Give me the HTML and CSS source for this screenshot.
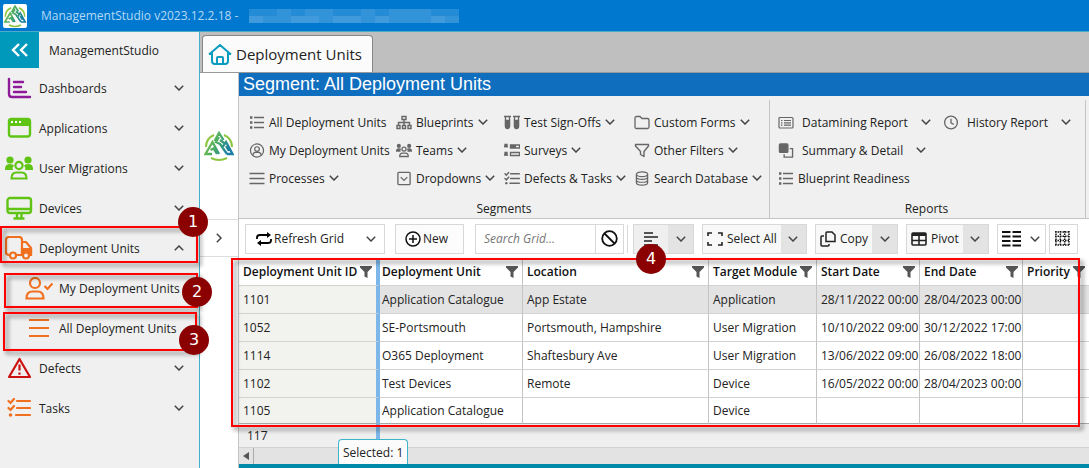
FILE: index.html
```html
<!DOCTYPE html>
<html lang="en">
<head>
    <meta charset="UTF-8">
    <meta name="viewport" content="width=device-width, initial-scale=1.0">
    <title>ManagementStudio</title>
    <link rel="stylesheet" href="styles.css">
</head>
<body>

<!-- Shared icons -->
<svg class="sprite" aria-hidden="true">
    <defs>
        <linearGradient id="logo-grad" gradientUnits="userSpaceOnUse" x1="2" y1="0" x2="28" y2="12">
            <stop offset="0" stop-color="#8cc63f"/>
            <stop offset=".5" stop-color="#4fae60"/>
            <stop offset="1" stop-color="#1b7fa3"/>
        </linearGradient>
    </defs>
    <symbol id="i-logo" viewBox="0 0 30 32">
        <g fill="none" stroke-width="2">
            <path stroke="#8cc63f" d="M2 17A13 13 0 0 1 10 5M20 5a13 13 0 0 1 8 12M7 28q8 4 16 0"/>
            <path stroke="url(#logo-grad)" stroke-width="2.300" d="M8 24H1.500L8.500 12 15 24M6.500 20l3-1.500L13 24M10.500 11L15 3l4.500 7M15 7l-3 5 4 2 7 10M16 10l4 3M18.500 17l3.500-5 6.500 12H23M22 16l3 5"/>
        </g>
    </symbol>
    <symbol id="i-down" viewBox="0 0 10 6"><path d="M.8.8L5 5l4.200-4.200" fill="none" stroke="currentColor" stroke-width="1.500"/></symbol>
    <symbol id="i-filter" viewBox="0 0 12 12"><path d="M0 0h12v1.500L7.500 6v6l-3-1.500V6L0 1.500z" fill="currentColor"/></symbol>
    <symbol id="i-list" viewBox="0 0 16 14"><path d="M5 2h10M5 7h10M5 12h10" stroke="currentColor" stroke-width="1.500"/><path d="M1 .8h2.400v2.400H1zM1 5.800h2.400v2.400H1zM1 10.800h2.400v2.400H1z" fill="currentColor"/></symbol>
    <symbol id="i-bars" viewBox="0 0 16 14"><path d="M.5 2h15M.5 7h15M.5 12h15" stroke="currentColor" stroke-width="1.500"/></symbol>
    <symbol id="i-tasks" viewBox="0 0 24 20"><g fill="none" stroke="currentColor" stroke-width="2.200" stroke-linecap="round"><path d="M10 3h13M10 10h13M9 17h14M1.500 3l2 2L7 1M1.500 10l2 2L7 8"/></g><circle cx="3.500" cy="17" r="1.800" fill="currentColor"/></symbol>
    <symbol id="i-users" viewBox="0 0 28 24"><g fill="currentColor"><circle cx="5" cy="4" r="3.600"/><circle cx="23" cy="4" r="3.600"/><path d="M0 13q0-5 5-5 3 0 4 1.500-2 2-1 4.500H0zM28 13q0-5-5-5-3 0-4 1.500 2 2 1 4.500h8z"/></g><g fill="none" stroke="currentColor" stroke-width="2.200"><circle cx="14" cy="9.500" r="3.600"/><path d="M6.500 22.500q0-6 5-6h5q5 0 5 6z"/></g></symbol>
</svg>

<header class="titlebar">
    <span class="app-logo"><svg width="24" height="24"><use href="#i-logo"/></svg></span>
    <span>ManagementStudio v2023.12.2.18 -</span>
    <svg class="redacted" width="210" height="14" viewBox="0 0 15 2" preserveAspectRatio="none" shape-rendering="crispEdges" fill="#fff">
        <path opacity=".14" d="M0 0h15v1H0z"/>
        <path opacity=".2" d="M0 1h15v1H0z"/>
        <path opacity=".07" d="M2 0h1v1H2zM4 0h2v1H4zM8 0h1v1H8zM10 0h3v1h-3zM0 1h1v1H0zM3 1h2v1H3zM6 1h2v1H6zM9 1h1v1H9zM13 1h1v1h-1z"/>
    </svg>
</header>

<div class="app">
    <nav class="sidebar">
        <div class="sidebar-head">
            <button class="collapse" aria-label="Collapse menu"><svg width="18" height="14" viewBox="0 0 18 14" fill="none" stroke="#fff" stroke-width="2.400"><path d="M8 1L2 7l6 6M16 1l-6 6 6 6"/></svg></button>
            <span>ManagementStudio</span>
        </div>
        <ul class="menu">
            <li><a href="#">
                <svg class="menu-icon" viewBox="0 0 26 24" fill="none" stroke="#8e1a99" stroke-width="2.400" stroke-linecap="round"><path d="M3 3v15q0 3 3 3h18M8 6h9M8 11h7M8 16h12"/></svg>
                <span>Dashboards</span><svg class="chev"><use href="#i-down"/></svg></a></li>
            <li><a href="#">
                <svg class="menu-icon" viewBox="0 0 26 24"><rect x="3" y="3" width="21" height="17.500" rx="2.500" fill="none" stroke="#60c414" stroke-width="2.400"/><path d="M3 3h21v7H3z" fill="#60c414"/><path d="M5 6h2M9 6h2M13 6h2" stroke="#fff" stroke-width="2"/></svg>
                <span>Applications</span><svg class="chev"><use href="#i-down"/></svg></a></li>
            <li><a href="#">
                <svg class="menu-icon green"><use href="#i-users"/></svg>
                <span>User Migrations</span><svg class="chev"><use href="#i-down"/></svg></a></li>
            <li><a href="#">
                <svg class="menu-icon" viewBox="0 0 26 24" fill="none" stroke="#60c414" stroke-width="2.400"><rect x="1.500" y="2" width="23.500" height="15" rx="2.500"/><path d="M2 13h23M11 17v5M15.500 17v5M7.500 22.500h11"/></svg>
                <span>Devices</span><svg class="chev"><use href="#i-down"/></svg></a></li>
            <li class="open"><a href="#">
                <svg class="menu-icon truck" viewBox="0 0 28 24" fill="none" stroke="#f07020" stroke-width="2.200"><path d="M4 19q-3 0-3-3V4q0-3 3-3h10q3 0 3 3v15h-6M17 6h4l5 6v7h-1"/><path d="M17 13h9v5h-9z" fill="#f07020"/><circle cx="8" cy="19.500" r="3" fill="#f0f0f0"/><circle cx="21" cy="19.500" r="3" fill="#f0f0f0"/></svg>
                <span>Deployment Units</span><svg class="chev up"><use href="#i-down"/></svg></a>
                <span class="mark mark-1"></span><span class="badge badge-1">1</span>
                <ul class="submenu">
                    <li><a href="#">
                        <svg width="28" height="23" viewBox="0 0 28 23" fill="none" stroke="#f07020" stroke-width="2.200"><circle cx="10" cy="6" r="5"/><path d="M1.500 21.500q0-7 6-7h5q6 0 6 7zM19.500 9l3 3 5-5.500"/></svg>
                        <span>My Deployment Units</span></a>
                        <span class="mark mark-2"></span><span class="badge badge-2">2</span></li>
                    <li><a href="#">
                        <svg width="28" height="18" viewBox="0 0 28 18" stroke="#f07020" stroke-width="2"><path d="M4 1h20M4 9h20M4 17h20"/></svg>
                        <span>All Deployment Units</span></a>
                        <span class="mark mark-3"></span><span class="badge badge-3">3</span></li>
                </ul>
            </li>
            <li><a href="#">
                <svg class="menu-icon" viewBox="0 0 26 24" fill="none" stroke="#cc1111" stroke-width="2.200" stroke-linejoin="round"><path d="M13.500 3L24 21H3zM13.500 8.500v6M13.500 16.500v2.200"/></svg>
                <span>Defects</span><svg class="chev"><use href="#i-down"/></svg></a></li>
            <li><a href="#">
                <svg class="menu-icon orange"><use href="#i-tasks" x="2" y="2" width="24" height="20"/></svg>
                <span>Tasks</span><svg class="chev"><use href="#i-down"/></svg></a></li>
        </ul>
    </nav>

    <main class="main">
        <div class="tabs">
            <a class="tab" href="#">
                <svg width="24" height="21" viewBox="0 0 24 21" fill="none" stroke="#0c9cc0" stroke-width="2" stroke-linejoin="round"><path d="M1 10.500L12 1l11 9.500M4 8v9q0 3 3 3h10q3 0 3-3V8M9 20v-6q0-1 1-1h4q1 0 1 1v6"/></svg>
                <span>Deployment Units</span>
            </a>
        </div>
        <div class="workspace">
            <aside class="rail">
                <div class="rail-logo"><svg width="30" height="32"><use href="#i-logo"/></svg></div>
                <button class="rail-open" aria-label="Expand"><svg class="chev right"><use href="#i-down"/></svg></button>
            </aside>
            <section class="content">
                <h1>Segment: All Deployment Units</h1>

                <div class="ribbon">
                    <div class="group segments">
                        <div class="group-items">
                            <button><svg class="ic"><use href="#i-list"/></svg>All Deployment Units</button>
                            <button><svg class="ic" viewBox="0 0 16 14" fill="none" stroke="currentColor" stroke-width="1.400"><path d="M6 1h4v3H6zM8 4v6M2.500 10V7h11v3"/><path d="M1 10h3v3H1zM6.500 10h3v3h-3zM12 10h3v3h-3z"/></svg>Blueprints<svg class="chev"><use href="#i-down"/></svg></button>
                            <button><svg class="ic" viewBox="0 0 16 14" fill="none" stroke="currentColor" stroke-width="1.300"><path d="M0 1h7M9 1h7M1.500 1v10q0 2 2 2t2-2V1M10.500 1v10q0 2 2 2t2-2V1"/><path d="M1.500 5h4v6q-2 3-4 0zM10.500 5h4v6q-2 3-4 0z" fill="currentColor"/></svg>Test Sign-Offs<svg class="chev"><use href="#i-down"/></svg></button>
                            <button><svg class="ic" viewBox="0 0 16 14" fill="none" stroke="currentColor" stroke-width="1.300"><path d="M1 2.500Q1 1 2.500 1H6l2 2h5.500Q15 3 15 4.500v7q0 1.500-1.500 1.500h-11Q1 13 1 11.500z"/></svg>Custom Forms<svg class="chev"><use href="#i-down"/></svg></button>

                            <button><svg class="ic" viewBox="0 0 16 16" fill="none" stroke="currentColor" stroke-width="1.300"><circle cx="8" cy="8" r="7"/><circle cx="8" cy="6.500" r="2.500"/><path d="M3.500 13q.5-3 3-3h3q2.500 0 3 3"/></svg>My Deployment Units</button>
                            <button><svg class="ic"><use href="#i-users"/></svg>Teams<svg class="chev"><use href="#i-down"/></svg></button>
                            <button><svg class="ic" viewBox="0 0 16 14" fill="none" stroke="currentColor" stroke-width="1.300"><path d="M0 3h4M0 11.500h4" stroke-width="1.500"/><path d="M1 1h2v2H1zM1 9h2v2H1z" fill="currentColor"/><path d="M6.500 1.500h9v3h-9zM6.500 9h9v3h-9z"/><path d="M6 3h6" stroke-width="3"/></svg>Surveys<svg class="chev"><use href="#i-down"/></svg></button>
                            <button><svg class="ic" viewBox="0 0 16 14" fill="none" stroke="currentColor" stroke-width="1.400" stroke-linejoin="round"><path d="M1.500 1h13v1.500L10 8v5l-3.500-2V8l-5-5.500z"/></svg>Other Filters<svg class="chev"><use href="#i-down"/></svg></button>

                            <button><svg class="ic"><use href="#i-bars"/></svg>Processes<svg class="chev"><use href="#i-down"/></svg></button>
                            <button><svg class="ic" viewBox="0 0 16 16" fill="none" stroke="currentColor" stroke-width="1.400"><rect x="1.500" y="1.500" width="13" height="13" rx="1"/><path d="M4.500 6.500L8 10l3.500-3.500"/></svg>Dropdowns<svg class="chev"><use href="#i-down"/></svg></button>
                            <button><svg class="ic"><use href="#i-tasks"/></svg>Defects &amp; Tasks<svg class="chev"><use href="#i-down"/></svg></button>
                            <button><svg class="ic" viewBox="0 0 16 16" fill="none" stroke="currentColor" stroke-width="1.300"><ellipse cx="8" cy="3.500" rx="6" ry="2.500"/><path d="M2 3.500v9q0 2.500 6 2.500t6-2.500v-9M2 6.500Q2 9 8 9t6-2.500M2 9.500Q2 12 8 12t6-2.500"/></svg>Search Database<svg class="chev"><use href="#i-down"/></svg></button>
                        </div>
                        <div class="group-name">Segments</div>
                    </div>
                    <div class="group reports">
                        <div class="group-items">
                            <button class="wide"><svg class="ic" viewBox="0 0 16 14" fill="none" stroke="currentColor" stroke-width="1.200"><rect x="1" y="2" width="14" height="10.500" rx="1"/><path d="M3 5h1.500M6 5h7M3 7.300h1.500M6 7.300h7M3 9.600h1.500M6 9.600h7"/></svg>Datamining Report<svg class="chev"><use href="#i-down"/></svg></button>
                            <button class="wide"><svg class="ic" viewBox="0 0 16 16" fill="none" stroke="currentColor" stroke-width="1.400"><circle cx="8" cy="8" r="6.800"/><path d="M8 4v4.500l3 1.500"/></svg>History Report<svg class="chev"><use href="#i-down"/></svg></button>
                            <button class="wide"><svg class="ic" viewBox="0 0 16 16" fill="none" stroke="currentColor" stroke-width="1.400"><rect x="1" y="1" width="9" height="9" rx="1" fill="currentColor"/><path d="M12 6h3v9H6v-3"/></svg>Summary &amp; Detail<svg class="chev"><use href="#i-down"/></svg></button>
                            <span></span>
                            <button><svg class="ic"><use href="#i-list"/></svg>Blueprint Readiness</button>
                        </div>
                        <div class="group-name">Reports</div>
                    </div>
                </div>

                <div class="toolbar">
                    <button class="tool refresh"><svg width="16" height="14" viewBox="0 0 16 14" fill="none" stroke="#000" stroke-width="1.800"><path d="M1 7V5.500Q1 3 4 3h9M15 7v1.500q0 2.500-3 2.500H3"/><path d="M11 0l4 3-4 3zM5 8l-4 3 4 3z" fill="#000" stroke="none"/></svg>Refresh Grid<svg class="chev"><use href="#i-down"/></svg></button>
                    <button class="tool new"><svg width="16" height="16" viewBox="0 0 16 16" fill="none" stroke="#111" stroke-width="1.500"><circle cx="8" cy="8" r="7"/><path d="M8 4v8M4 8h8"/></svg>New</button>
                    <div class="search">
                        <input type="text" placeholder="Search Grid..." aria-label="Search Grid">
                        <button aria-label="Clear search"><svg width="17" height="17" viewBox="0 0 17 17" fill="none" stroke="#111" stroke-width="1.800"><circle cx="8.500" cy="8.500" r="7.300"/><path d="M3.500 3.500l10 10"/></svg></button>
                    </div>
                    <span class="divider"></span>
                    <div class="split">
                        <button class="align" aria-label="Row layout"><svg width="16" height="14" viewBox="0 0 16 14" stroke="#222" stroke-width="1.500"><path d="M1 1h9M1 5h14M1 9h8M1 13h14"/></svg></button>
                        <button class="drop" aria-label="Row layout options"><svg class="chev"><use href="#i-down"/></svg></button>
                    </div>
                    <div class="split">
                        <button><svg width="16" height="14" viewBox="0 0 16 14" fill="none" stroke="#222" stroke-width="1.600"><path d="M1 4V1h4M11 1h4v3M15 10v3h-4M5 13H1v-3"/></svg>Select All</button>
                        <button class="drop" aria-label="Select options"><svg class="chev"><use href="#i-down"/></svg></button>
                    </div>
                    <div class="split">
                        <button><svg width="16" height="16" viewBox="0 0 16 16" fill="none" stroke="#222" stroke-width="1.500"><path d="M7 1h5l3 3v6.500H6V2q0-1 1-1zM4 5H2Q1 5 1 6v8q0 1 1 1h6q1 0 1-1v-1"/></svg>Copy</button>
                        <button class="drop" aria-label="Copy options"><svg class="chev"><use href="#i-down"/></svg></button>
                    </div>
                    <div class="split">
                        <button><svg width="16" height="14" viewBox="0 0 16 14" fill="none" stroke="#222" stroke-width="1.600"><rect x="1" y="1" width="14" height="12" rx="1"/><path d="M1 2.500h14" stroke-width="3"/><path d="M8 3v10M1 8.500h14"/></svg>Pivot</button>
                        <button class="drop" aria-label="Pivot options"><svg class="chev"><use href="#i-down"/></svg></button>
                    </div>
                    <button class="tool columns" aria-label="Columns"><svg width="19" height="16" viewBox="0 0 19 16" stroke="#111" stroke-width="1.800"><path d="M0 1h8.500M10.500 1H19M0 5.500h8.500M10.500 5.500H19M0 10h8.500M10.500 10H19M0 14.500h8.500M10.500 14.500H19"/></svg><svg class="chev"><use href="#i-down"/></svg></button>
                    <button class="tool dots" aria-label="Grid lines"><svg width="16" height="15" viewBox="0 0 16 15" stroke="#111" stroke-width="1.500" stroke-dasharray="1.500 1"><path d="M0 1h15M0 5.200h15M0 9.500h15M0 14h15M1 0v15M5.300 0v15M9.700 0v15M14 0v15"/></svg></button>
                    <span class="badge badge-4">4</span>
                </div>

                <div class="grid">
                    <table>
                        <colgroup>
                            <col class="c-id"><col class="c-unit"><col class="c-location"><col class="c-module"><col class="c-date"><col class="c-date"><col>
                        </colgroup>
                        <thead>
                            <tr>
                                <th><div>Deployment Unit ID<svg class="filter"><use href="#i-filter"/></svg></div></th>
                                <th><div>Deployment Unit<svg class="filter"><use href="#i-filter"/></svg></div></th>
                                <th><div>Location<svg class="filter"><use href="#i-filter"/></svg></div></th>
                                <th><div>Target Module<svg class="filter"><use href="#i-filter"/></svg></div></th>
                                <th><div>Start Date<svg class="filter"><use href="#i-filter"/></svg></div></th>
                                <th><div>End Date<svg class="filter"><use href="#i-filter"/></svg></div></th>
                                <th><div>Priority<svg class="filter"><use href="#i-filter"/></svg></div></th>
                            </tr>
                        </thead>
                        <tbody>
                            <tr class="selected"><td>1101</td><td>Application Catalogue</td><td>App Estate</td><td>Application</td><td>28/11/2022 00:00</td><td>28/04/2023 00:00</td><td></td></tr>
                            <tr><td>1052</td><td>SE-Portsmouth</td><td>Portsmouth, Hampshire</td><td>User Migration</td><td>10/10/2022 09:00</td><td>30/12/2022 17:00</td><td></td></tr>
                            <tr><td>1114</td><td>O365 Deployment</td><td>Shaftesbury Ave</td><td>User Migration</td><td>13/06/2022 09:00</td><td>26/08/2022 18:00</td><td></td></tr>
                            <tr><td>1102</td><td>Test Devices</td><td>Remote</td><td>Device</td><td>16/05/2022 00:00</td><td>28/04/2023 00:00</td><td></td></tr>
                            <tr><td>1105</td><td>Application Catalogue</td><td></td><td>Device</td><td></td><td></td><td></td></tr>
                        </tbody>
                        <tfoot>
                            <tr><td>117</td><td colspan="6"></td></tr>
                        </tfoot>
                    </table>
                    <span class="mark mark-4"></span>
                </div>
                <div class="scrollbar"><button aria-label="Scroll left"><svg width="6" height="8" viewBox="0 0 6 8"><path d="M6 0v8L0 4z" fill="#555"/></svg></button></div>
                <footer class="statusbar"><span class="selection">Selected: 1</span></footer>
            </section>
        </div>
    </main>
</div>

</body>
</html>
```

FILE: styles.css
```css
:root {
    --blue: #0078d0;
    --teal: #0099bc;
    --panel: #f0f0f0;
    --line: #c4c4c4;
    --mark: #ff0000;
}
* { box-sizing: border-box; }
body {
    margin: 0;
    height: 100vh;
    display: flex;
    flex-direction: column;
    overflow: hidden;
    font-family: "Open Sans", "Noto Sans", sans-serif;
    font-size: 12px;
    color: #222;
    background: #fff;
}
a { color: inherit; text-decoration: none; }
ul { list-style: none; margin: 0; padding: 0; }
svg { flex: none; }
button {
    font: inherit;
    color: inherit;
    padding: 0;
    border: 0;
    background: none;
    display: flex;
    align-items: center;
    white-space: nowrap;
    cursor: pointer;
}
.sprite { position: absolute; width: 0; height: 0; }
.chev { width: 10px; height: 6px; color: #444; }
.chev.up { transform: rotate(180deg); }
.chev.right { transform: rotate(-90deg); }

/* Title bar */
.titlebar {
    height: 32px;
    flex: none;
    display: flex;
    align-items: center;
    padding-left: 3px;
    background: var(--blue);
    color: #b5d9f2;
    border-bottom: 1px solid #4fa9c9;
}
.app-logo {
    width: 24px;
    height: 24px;
    margin-right: 14px;
    background: #fff;
    border-radius: 2px;
}
.redacted { margin-left: 11px; }

.app { flex: 1; min-height: 0; display: flex; }

/* Left menu */
.sidebar {
    width: 200px;
    flex: none;
    background: var(--panel);
    border-right: 1px solid #3fb0c9;
    position: relative;
    z-index: 2;
}
.sidebar-head { display: flex; align-items: center; gap: 10px; height: 36px; }
.collapse {
    width: 39px;
    height: 36px;
    justify-content: center;
    background: var(--teal);
}
.menu li { position: relative; }
.menu a {
    height: 40px;
    display: flex;
    align-items: center;
    gap: 6px;
    padding: 0 15px 0 5px;
}
.menu a span { flex: 1; }
.menu-icon { width: 28px; height: 24px; }
.green { color: #60c414; }
.orange { color: #f07020; }
.menu .submenu a { padding-left: 25px; }

/* Callouts */
.mark {
    position: absolute;
    border: 2px solid var(--mark);
    filter: drop-shadow(3px 3px 2px rgba(0, 0, 0, .5));
    pointer-events: none;
}
.mark-1 { left: 0; right: 1px; top: -2px; height: 37px; }
.mark-2 { left: 4px; right: 1px; top: 5px; height: 35px; }
.mark-3 { left: 3px; right: 2px; top: 4px; height: 39px; }
.mark-4 { left: -8px; right: 9px; top: 0; height: 169px; }
.badge {
    position: absolute;
    width: 30px;
    height: 30px;
    border-radius: 50%;
    background: #8b0000;
    color: #fff;
    font: 16px/30px "DejaVu Sans", sans-serif;
    text-align: center;
    z-index: 3;
}
.badge-1 { right: -9px; top: -21px; }
.badge-2 { right: -13px; top: 9px; }
.badge-3 { right: -10px; top: 17px; }
.badge-4 { left: 397px; top: 25px; }

/* Tabs */
.main { flex: 1; min-width: 0; display: flex; flex-direction: column; }
.tabs {
    height: 41px;
    flex: none;
    display: flex;
    align-items: flex-end;
    padding-left: 2px;
    background: #bfbfbf;
    border-bottom: 1px solid #999;
}
.tab {
    height: 37px;
    display: flex;
    align-items: center;
    gap: 4px;
    padding: 0 10px 0 5px;
    background: #fbfbfb;
    border: 1px solid #888;
    border-bottom: 0;
    border-radius: 4px 4px 0 0;
    font-size: 15px;
}

.workspace { flex: 1; min-height: 0; display: flex; }
.rail { width: 38px; flex: none; }
.rail-logo { height: 146px; padding: 57px 0 0 4px; }
.rail-open {
    width: 100%;
    height: 38px;
    justify-content: center;
    border-top: 1px solid #ddd;
    border-bottom: 1px solid #ddd;
}
.content {
    flex: 1;
    min-width: 0;
    display: flex;
    flex-direction: column;
    border-left: 1px solid var(--line);
}
h1 {
    margin: 0;
    padding-left: 4px;
    background: #106ebe;
    color: #fff;
    font: 18px/23px "Liberation Sans", Arial, sans-serif;
}

/* Ribbon */
.ribbon {
    height: 123px;
    flex: none;
    display: flex;
    background: var(--panel);
    border-bottom: 1px solid var(--line);
}
.group {
    display: flex;
    flex-direction: column;
    justify-content: space-between;
    margin-top: 4px;
    padding: 8px 0 1px 10px;
    border-right: 1px solid var(--line);
}
.group-items { display: grid; grid-auto-rows: 28px; color: #222; }
.group-items button { gap: 4px; }
.segments { width: 531px; }
.segments .group-items { grid-template-columns: 147px 108px 130px 1fr; }
.reports { width: 316px; padding-left: 8px; }
.reports .group-items { grid-template-columns: 165px 1fr; }
.group-items .wide { gap: 8px; }
.wide .chev { margin-left: 5px; }
.ic { width: 16px; height: 15px; color: #666; }
.group-name { text-align: center; line-height: 16px; }
.segments .group-name { padding-right: 10px; }
.reports .group-name { padding-right: 10px; }

/* Toolbar */
.toolbar {
    height: 39px;
    flex: none;
    display: flex;
    align-items: center;
    padding-left: 6px;
    position: relative;
}
.tool, .search, .split { height: 30px; border: 1px solid #d8d8d8; }
.tool { gap: 2px; }
.refresh { width: 140px; padding: 0 8px 0 10px; margin-right: 10px; }
.refresh .chev { margin-left: auto; }
.new { width: 69px; padding-left: 9px; margin-right: 11px; background: #fcfcfc; }
.search { display: flex; width: 149px; }
.search input {
    width: 120px;
    min-width: 0;
    padding: 0 8px;
    border: 0;
    border-right: 1px solid #d8d8d8;
    font: inherit;
    font-style: italic;
}
.search input::placeholder { color: #777; }
.search button { flex: 1; justify-content: center; }
.divider { width: 1px; height: 28px; margin: 0 5px 0 3px; background: #d8d8d8; }
.split { display: flex; margin-right: 8px; background: #f8f8f8; }
.split button { gap: 4px; padding: 0 4px; }
.split .align { padding: 0 9px; background: #efefef; }
.split .drop { width: 25px; padding: 0; justify-content: center; background: #e3e3e3; }
.columns { width: 49px; justify-content: center; gap: 9px; margin-right: 3px; }
.dots { width: 29px; justify-content: center; }

/* Data grid */
.grid { position: relative; z-index: 1; }
table { width: 100%; table-layout: fixed; border-collapse: separate; border-spacing: 0; }
.c-id { width: 141px; }
.c-unit { width: 143px; }
.c-location { width: 186px; }
.c-module { width: 108px; }
.c-date { width: 103px; }
th, td {
    height: 28px;
    padding: 0 0 0 4px;
    border-right: 1px solid var(--line);
    border-bottom: 1px solid #d2d2d2;
    text-align: left;
    white-space: nowrap;
}
th { font-weight: 600; color: #111; }
th div { display: flex; align-items: center; justify-content: space-between; padding-right: 4px; }
.filter { width: 12px; height: 12px; color: #555; }
th:first-child, td:first-child { border-right: 4px solid #7db7ea; }
th:nth-child(2), td:nth-child(2) { padding-left: 2px; }
td:first-child { background: #f2f3ee; }
.selected td:not(:first-child) { background: #e3e3e3; }
th:last-child, td:last-child { border-right: 0; }
tbody tr:last-child td { height: 26px; border-bottom-color: #aaa; }
tfoot td, tfoot td:first-child { height: 24px; padding-left: 8px; background: #efefef; }

.scrollbar {
    height: 16px;
    flex: none;
    display: flex;
    background: #e3e3e3;
}
.scrollbar button { width: 15px; justify-content: center; border-right: 1px solid #aaa; }
.statusbar { flex: 1; position: relative; z-index: 2; background: #008aaa; }
.selection {
    position: absolute;
    left: 99px;
    bottom: 100%;
    height: 25px;
    padding: 0 4px;
    line-height: 25px;
    background: #fbfbfb;
    border: 1px solid #3fb5cc;
    border-bottom: 0;
    border-radius: 4px 4px 0 0;
}
```
